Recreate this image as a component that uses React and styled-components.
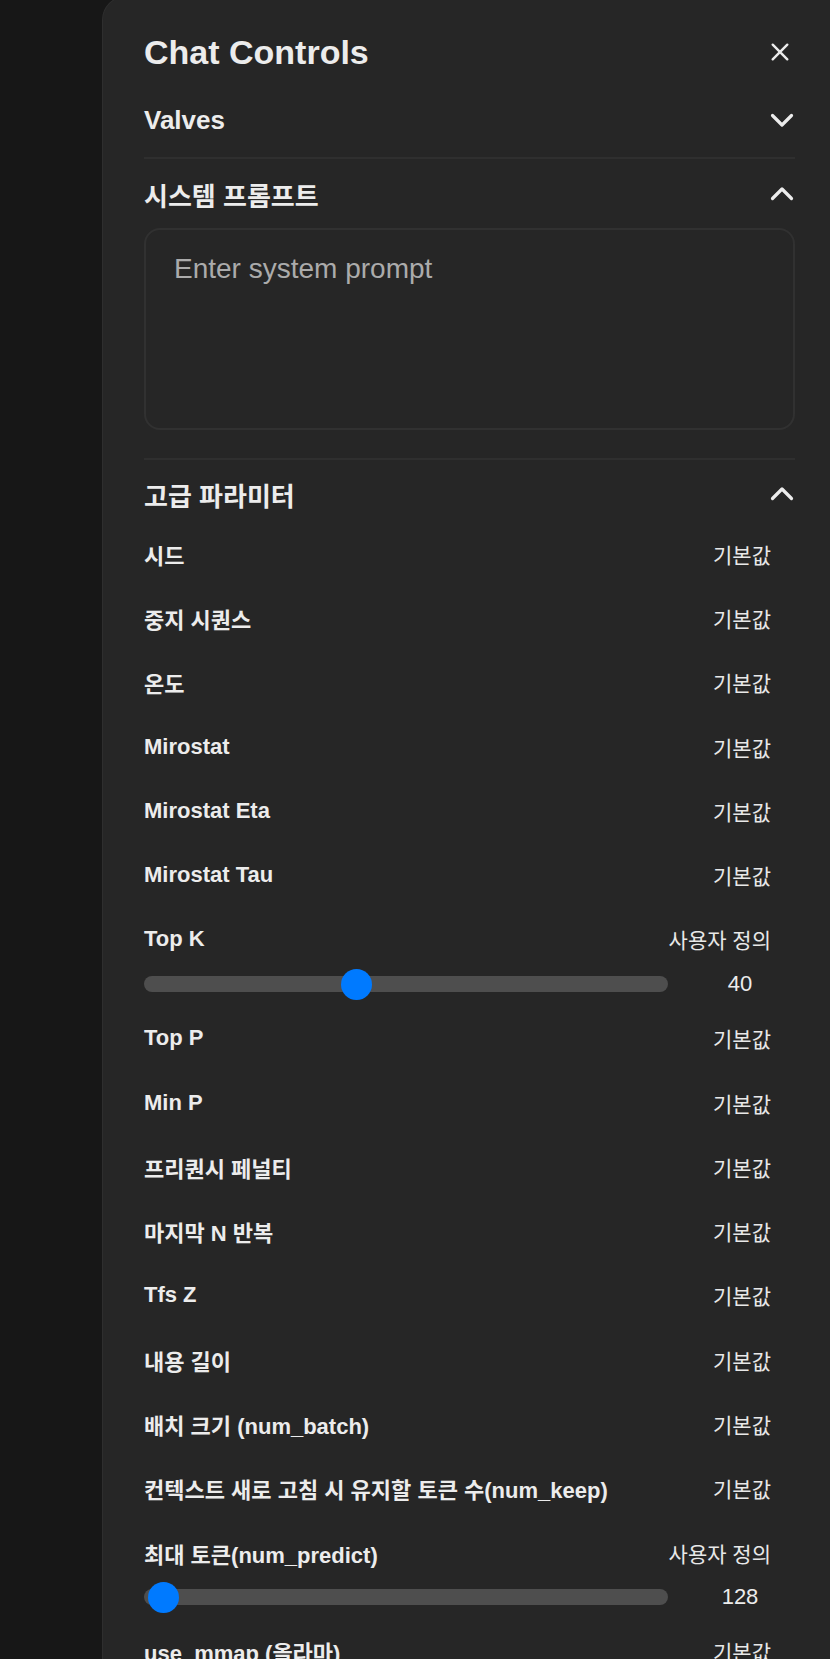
import React from "react";
import styled, { createGlobalStyle } from "styled-components";

const GlobalStyle = createGlobalStyle`
  html, body {
    margin: 0;
    padding: 0;
    height: 100%;
    overflow: hidden;
    background: #171717;
  }
  * {
    box-sizing: border-box;
  }
`;

const Page = styled.div`
  display: flex;
  height: 100vh;
  overflow: hidden;
  background: #171717;
  font-family: "Liberation Sans", "Noto Sans CJK KR", sans-serif;
  color: #ececec;
`;

const Backdrop = styled.div`
  width: 102px;
  flex-shrink: 0;
  background: #171717;
`;

const Panel = styled.aside`
  flex: 1;
  margin-top: -4px;
  padding: 35px 35px 0 41px;
  background: #262626;
  border-left: 1px solid #2e2e2e;
  border-top: 1px solid #2e2e2e;
  border-top-left-radius: 24px;
  display: flex;
  flex-direction: column;

  & > * {
    flex-shrink: 0;
  }
`;

const TitleRow = styled.div`
  display: flex;
  align-items: center;
  justify-content: space-between;
  height: 40px;
`;

const Title = styled.h1`
  margin: 0;
  font-size: 34px;
  line-height: 40px;
  font-weight: 700;
  color: #ececec;
`;

const IconButton = styled.button`
  background: none;
  border: none;
  padding: 0;
  margin-right: ${(p) => p.$offset || 0}px;
  display: flex;
  align-items: center;
  justify-content: center;
  color: #ececec;
  cursor: pointer;
`;

const SectionHeader = styled.div`
  display: flex;
  align-items: center;
  justify-content: space-between;
  height: 48px;
  margin-top: ${(p) => p.$top}px;
`;

const SectionTitle = styled.h2`
  margin: 0;
  font-size: 26px;
  font-weight: 700;
  color: #ececec;
`;

const Divider = styled.hr`
  margin: ${(p) => p.$top}px 0 0;
  border: none;
  height: 2px;
  background: #2f2f2f;
`;

const PromptBox = styled.textarea`
  display: block;
  margin-top: 10px;
  height: 202px;
  width: 100%;
  resize: none;
  background: #262626;
  border: 2px solid #313131;
  border-radius: 16px;
  padding: 22px 28px;
  font-family: "Liberation Sans", "Noto Sans CJK KR", sans-serif;
  font-size: 28px;
  line-height: 34px;
  color: #ececec;
  outline: none;

  &::placeholder {
    color: #ababab;
  }
`;

const ParamList = styled.div`
  margin-top: 3.5px;
  display: flex;
  flex-direction: column;
`;

const ParamItem = styled.div`
  display: flex;
  flex-direction: column;
  flex-shrink: 0;
`;

const ParamRow = styled.div`
  display: flex;
  align-items: center;
  justify-content: space-between;
  height: 64.3px;
  padding-right: 24px;
`;

const ParamLabel = styled.span`
  font-size: 22px;
  font-weight: 700;
  color: #ececec;
  white-space: nowrap;
`;

const ParamValue = styled.button`
  background: none;
  border: none;
  padding: 0;
  font-family: "Liberation Sans", "Noto Sans CJK KR", sans-serif;
  font-size: 21px;
  font-weight: 400;
  color: #e8e8e8;
  cursor: pointer;
`;

const SliderRow = styled.div`
  display: flex;
  align-items: center;
  gap: 24px;
  height: 31px;
  margin: -3px 7px 6.5px 0;
`;

const Track = styled.div`
  position: relative;
  flex: 1;
  height: 16px;
  border-radius: 8px;
  background: #4e4e4e;
`;

const Thumb = styled.div`
  position: absolute;
  top: 50%;
  width: 31px;
  height: 31px;
  margin-top: -15.5px;
  border-radius: 50%;
  background: #007aff;
`;

const SliderValue = styled.span`
  width: 96px;
  text-align: center;
  font-size: 22px;
  color: #ececec;
`;

const CloseIcon = () => (
  <svg width="24" height="24" viewBox="0 0 24 24" fill="none">
    <path
      d="M4.7 4.7L19.3 19.3M19.3 4.7L4.7 19.3"
      stroke="currentColor"
      strokeWidth="2.4"
      strokeLinecap="round"
    />
  </svg>
);

const Chevron = ({ up }) => (
  <svg width="26" height="26" viewBox="0 0 26 26" fill="none">
    <path
      d={up ? "M3.5 17.5L13 8L22.5 17.5" : "M3.5 8.5L13 18L22.5 8.5"}
      stroke="currentColor"
      strokeWidth="3.2"
      strokeLinecap="round"
      strokeLinejoin="round"
    />
  </svg>
);

const params = [
  { label: "시드" },
  { label: "중지 시퀀스" },
  { label: "온도" },
  { label: "Mirostat" },
  { label: "Mirostat Eta" },
  { label: "Mirostat Tau" },
  { label: "Top K", value: 40, min: 0, max: 100 },
  { label: "Top P" },
  { label: "Min P" },
  { label: "프리퀀시 페널티" },
  { label: "마지막 N 반복" },
  { label: "Tfs Z" },
  { label: "내용 길이" },
  { label: "배치 크기 (num_batch)" },
  { label: "컨텍스트 새로 고침 시 유지할 토큰 수(num_keep)" },
  { label: "최대 토큰(num_predict)", value: 128, min: 0, max: 16000 },
  { label: "use_mmap (올라마)" },
  { label: "use_mlock (올라마)" },
  { label: "num_thread (올라마)" },
];

function Param({ label, value, min, max }) {
  const custom = value !== undefined;
  const p = custom ? (value - min) / (max - min) : 0;
  return (
    <ParamItem>
      <ParamRow>
        <ParamLabel>{label}</ParamLabel>
        <ParamValue>{custom ? "사용자 정의" : "기본값"}</ParamValue>
      </ParamRow>
      {custom && (
        <SliderRow>
          <Track>
            <Thumb style={{ left: `calc(${p * 100}% - ${p * 31}px)` }} />
          </Track>
          <SliderValue>{value}</SliderValue>
        </SliderRow>
      )}
    </ParamItem>
  );
}

export default function App() {
  return (
    <>
      <GlobalStyle />
      <Page>
        <Backdrop />
        <Panel>
          <TitleRow>
            <Title>Chat Controls</Title>
            <IconButton $offset={3}>
              <CloseIcon />
            </IconButton>
          </TitleRow>

          <SectionHeader $top={24}>
            <SectionTitle>Valves</SectionTitle>
            <IconButton>
              <Chevron />
            </IconButton>
          </SectionHeader>

          <Divider $top={13} />

          <SectionHeader $top={11}>
            <SectionTitle>시스템 프롬프트</SectionTitle>
            <IconButton>
              <Chevron up />
            </IconButton>
          </SectionHeader>
          <PromptBox placeholder="Enter system prompt" />

          <Divider $top={28} />

          <SectionHeader $top={10}>
            <SectionTitle>고급 파라미터</SectionTitle>
            <IconButton>
              <Chevron up />
            </IconButton>
          </SectionHeader>

          <ParamList>
            {params.map((item) => (
              <Param key={item.label} {...item} />
            ))}
          </ParamList>
        </Panel>
      </Page>
    </>
  );
}
